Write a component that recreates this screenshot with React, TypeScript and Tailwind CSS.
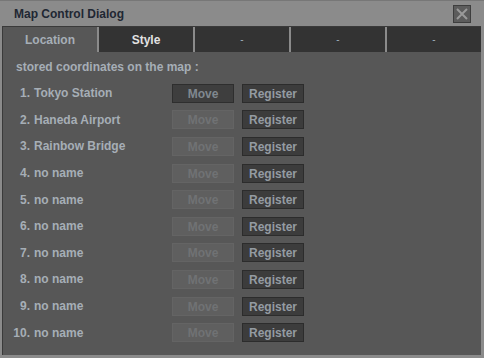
import React from "react";

const places = [
  "Tokyo Station",
  "Haneda Airport",
  "Rainbow Bridge",
  "no name",
  "no name",
  "no name",
  "no name",
  "no name",
  "no name",
  "no name",
];

const tabs = ["Location", "Style", "-", "-", "-"];

const Row = ({ n, name }: { n: number; name: string }) => {
  const canMove = n === 1;
  return (
    <div className="flex items-center h-[26.6px]">
      <span className="w-[27px] text-right">{n}.</span>
      <span className="ml-[4px] w-[138px]">{name}</span>
      <button
        className={
          canMove
            ? "w-[62px] h-[19px] bg-[#3e3e3e] border border-[#2e2e2e] text-[#80888f]"
            : "w-[62px] h-[19px] bg-[#5f5f5f] border border-[#646464] text-[#707274]"
        }
      >
        Move
      </button>
      <button className="ml-[8px] w-[62px] h-[19px] bg-[#3c3c3c] border border-[#2c2c2c] text-[#949ba2]">
        Register
      </button>
    </div>
  );
};

export default function App() {
  return (
    <div
      className="w-[484px] h-[358px] bg-[#8b8b8b] flex flex-col text-[12px] font-bold"
      style={{ fontFamily: '"Liberation Sans", Arial, sans-serif' }}
    >
      {/* title bar */}
      <div className="h-[26px] flex items-center justify-between border-t border-[#777] pl-[14px] pr-[13px]">
        <span className="text-[#1f2733]">Map Control Dialog</span>
        <div className="w-[18px] h-[18px] bg-[#5c5c5c] border border-[#3e3e3e] flex items-center justify-center">
          <svg width="14" height="14" viewBox="0 0 14 14">
            <path d="M2 2 L12 12 M12 2 L2 12" stroke="#9a9a9a" strokeWidth="2" />
          </svg>
        </div>
      </div>

      {/* panel */}
      <div className="flex-1 ml-[2px] mr-[3px] mb-[3px] bg-[#575757] border-l border-t border-[#3a3a3a] flex flex-col">
        <div className="flex h-[25px] gap-[2px] bg-[#8b8b8b]">
          {tabs.map((t, i) => (
            <div
              key={i}
              className={
                i === 0
                  ? "flex-1 bg-[#575757] flex items-center justify-center text-[#a6aeb6]"
                  : i === 1
                  ? "flex-1 bg-[#333333] flex items-center justify-center text-[#e2e2e2]"
                  : "flex-1 bg-[#333333] flex items-center justify-center text-[#9fb0bb] font-normal text-[10px]"
              }
            >
              {t}
            </div>
          ))}
        </div>
        <div className="text-[#a6aeb6] pt-[8px]">
          <div className="pl-[13px] leading-[14px] mb-[6px]">stored coordinates on the map :</div>
          {places.map((p, i) => (
            <Row key={i} n={i + 1} name={p} />
          ))}
        </div>
      </div>
    </div>
  );
}
